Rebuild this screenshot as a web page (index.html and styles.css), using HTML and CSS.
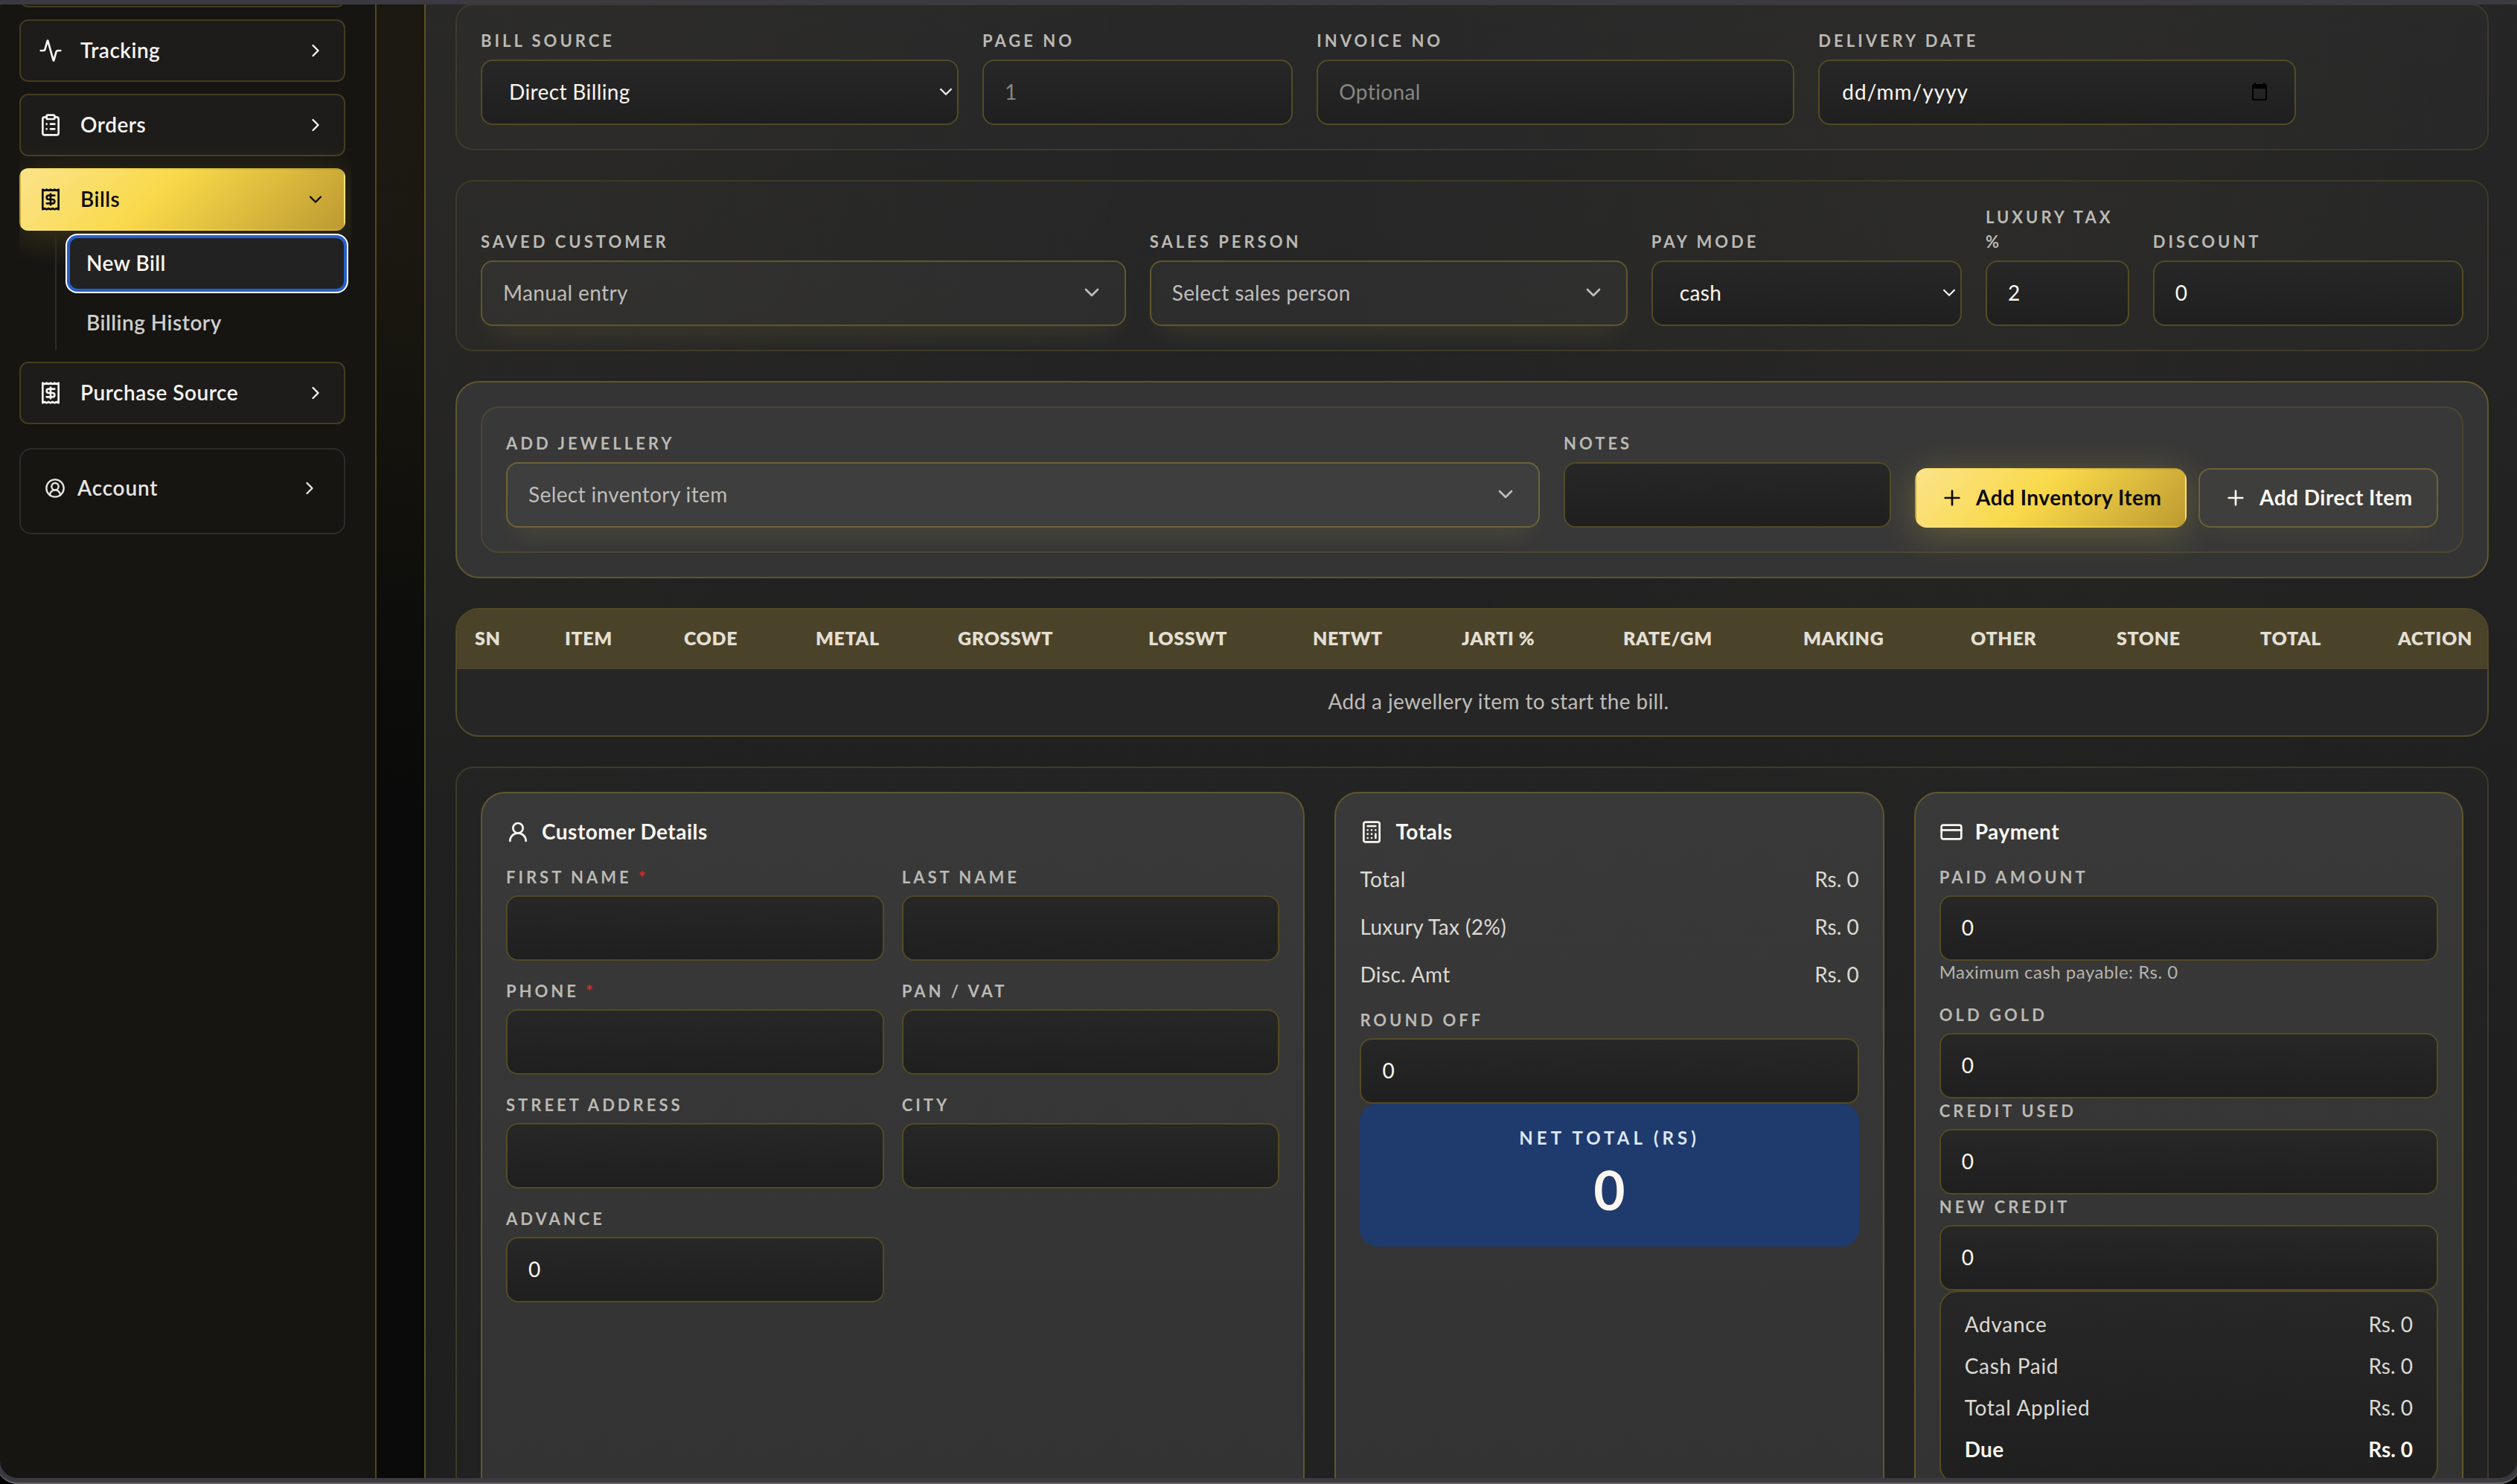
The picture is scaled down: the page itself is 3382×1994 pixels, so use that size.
FILE: index.html
```
<!DOCTYPE html>
<html lang="en">
<head>
    <meta charset="UTF-8">
    <meta name="viewport" content="width=device-width, initial-scale=1.0">
    <title>New Bill</title>
    <link rel="stylesheet" href="styles.css">
</head>
<body>

    <!-- Shared icons -->
    <svg class="sprite">
        <symbol id="chevron-right" viewBox="0 0 24 24"><path d="m9 18 6-6-6-6"/></symbol>
        <symbol id="chevron-down" viewBox="0 0 24 24"><path d="m6 9 6 6 6-6"/></symbol>
        <symbol id="plus" viewBox="0 0 24 24"><path d="M5 12h14M12 5v14"/></symbol>
        <symbol id="receipt" viewBox="0 0 24 24">
            <path d="M4 2v20l2-1 2 1 2-1 2 1 2-1 2 1 2-1 2 1V2l-2 1-2-1-2 1-2-1-2 1-2-1-2 1Z"/>
            <path d="M16 8h-6a2 2 0 1 0 0 4h4a2 2 0 1 1 0 4H8"/>
            <path d="M12 17.5v-11"/>
        </symbol>
    </svg>

    <div class="app">
        <aside class="sidebar">
            <nav class="nav">
                <a class="nav-item nav-hidden"></a>
                <a class="nav-item">
                    <svg class="icon" viewBox="0 0 24 24"><path d="M22 12h-2.48a2 2 0 0 0-1.93 1.46l-2.35 8.36a.25.25 0 0 1-.48 0L9.24 2.18a.25.25 0 0 0-.48 0l-2.35 8.36A2 2 0 0 1 4.49 12H2"/></svg>
                    <span>Tracking</span>
                    <svg class="icon chevron"><use href="#chevron-right"/></svg>
                </a>
                <a class="nav-item">
                    <svg class="icon" viewBox="0 0 24 24"><rect width="8" height="4" x="8" y="2" rx="1"/><path d="M16 4h2a2 2 0 0 1 2 2v14a2 2 0 0 1-2 2H6a2 2 0 0 1-2-2V6a2 2 0 0 1 2-2h2M12 11h4M12 16h4M8 11h.01M8 16h.01"/></svg>
                    <span>Orders</span>
                    <svg class="icon chevron"><use href="#chevron-right"/></svg>
                </a>
                <a class="nav-item active">
                    <svg class="icon"><use href="#receipt"/></svg>
                    <span>Bills</span>
                    <svg class="icon chevron"><use href="#chevron-down"/></svg>
                </a>
                <div class="subnav">
                    <a class="subnav-item current">New Bill</a>
                    <a class="subnav-item">Billing History</a>
                </div>
                <a class="nav-item">
                    <svg class="icon"><use href="#receipt"/></svg>
                    <span>Purchase Source</span>
                    <svg class="icon chevron"><use href="#chevron-right"/></svg>
                </a>
                <div class="account">
                    <svg class="icon" viewBox="0 0 24 24"><path d="M18 20a6 6 0 0 0-12 0"/><circle cx="12" cy="10" r="4"/><circle cx="12" cy="12" r="10"/></svg>
                    <span>Account</span>
                    <svg class="icon chevron"><use href="#chevron-right"/></svg>
                </div>
            </nav>
        </aside>

        <main class="main">
            <!-- Bill source -->
            <section class="card form-grid">
                <div class="field span-3">
                    <label>Bill Source</label>
                    <div class="control select">Direct Billing<svg class="arrow"><use href="#chevron-down"/></svg></div>
                </div>
                <div class="field span-2">
                    <label>Page No</label>
                    <input class="control" placeholder="1">
                </div>
                <div class="field span-3">
                    <label>Invoice No</label>
                    <input class="control" placeholder="Optional">
                </div>
                <div class="field span-3">
                    <label>Delivery Date</label>
                    <div class="control date">dd/mm/yyyy
                        <svg class="calendar" viewBox="0 0 24 24"><path d="M5 0h2v2h10V0h2v2h1a2 2 0 0 1 2 2v18a2 2 0 0 1-2 2H4a2 2 0 0 1-2-2V4a2 2 0 0 1 2-2h1ZM4 8v14h16V8Z" fill-rule="evenodd"/></svg>
                    </div>
                </div>
            </section>

            <!-- Customer and payment mode -->
            <section class="card form-grid">
                <div class="field span-4">
                    <label>Saved Customer</label>
                    <div class="control picker">Manual entry<svg class="icon"><use href="#chevron-down"/></svg></div>
                </div>
                <div class="field span-3">
                    <label>Sales Person</label>
                    <div class="control picker">Select sales person<svg class="icon"><use href="#chevron-down"/></svg></div>
                </div>
                <div class="field span-2">
                    <label>Pay Mode</label>
                    <div class="control select">cash<svg class="arrow"><use href="#chevron-down"/></svg></div>
                </div>
                <div class="field">
                    <label>Luxury Tax %</label>
                    <input class="control" value="2">
                </div>
                <div class="field span-2">
                    <label>Discount</label>
                    <input class="control" value="0">
                </div>
            </section>

            <!-- Add item -->
            <section class="card raised">
                <div class="add-row">
                    <div class="field">
                        <label>Add Jewellery</label>
                        <div class="control picker">Select inventory item<svg class="icon"><use href="#chevron-down"/></svg></div>
                    </div>
                    <div class="field">
                        <label>Notes</label>
                        <input class="control">
                    </div>
                    <div class="actions">
                        <button class="btn btn-gold"><svg class="icon"><use href="#plus"/></svg><span>Add Inventory Item</span></button>
                        <button class="btn btn-direct"><svg class="icon"><use href="#plus"/></svg><span>Add Direct Item</span></button>
                    </div>
                </div>
            </section>

            <!-- Items -->
            <section class="table-card">
                <table>
                    <thead>
                        <tr>
                            <th class="w-sn">SN</th>
                            <th class="w-item">Item</th>
                            <th class="w-code">Code</th>
                            <th class="w-metal">Metal</th>
                            <th class="w-gross">GrossWt</th>
                            <th class="w-loss">LossWt</th>
                            <th class="w-net">NetWt</th>
                            <th class="w-jarti">Jarti %</th>
                            <th class="w-rate">Rate/gm</th>
                            <th class="w-making">Making</th>
                            <th class="w-other">Other</th>
                            <th class="w-stone">Stone</th>
                            <th class="w-total">Total</th>
                            <th class="w-action">Action</th>
                        </tr>
                    </thead>
                    <tbody>
                        <tr>
                            <td colspan="14">Add a jewellery item to start the bill.</td>
                        </tr>
                    </tbody>
                </table>
            </section>

            <!-- Details, totals, payment -->
            <section class="card summary-grid">
                <div class="panel">
                    <h2>
                        <svg class="icon" viewBox="0 0 24 24"><circle cx="12" cy="8" r="5"/><path d="M20 21a8 8 0 0 0-16 0"/></svg>
                        <span>Customer Details</span>
                    </h2>
                    <div class="customer-grid">
                        <div class="field"><label>First Name <b>*</b></label><input class="control"></div>
                        <div class="field"><label>Last Name</label><input class="control"></div>
                        <div class="field"><label>Phone <b>*</b></label><input class="control"></div>
                        <div class="field"><label>PAN / VAT</label><input class="control"></div>
                        <div class="field"><label>Street Address</label><input class="control"></div>
                        <div class="field"><label>City</label><input class="control"></div>
                        <div class="field"><label>Advance</label><input class="control" value="0"></div>
                    </div>
                </div>

                <div class="panel">
                    <h2>
                        <svg class="icon" viewBox="0 0 24 24"><rect width="16" height="20" x="4" y="2" rx="2"/><path d="M8 6h8M16 14v4M16 10h.01M12 10h.01M8 10h.01M12 14h.01M8 14h.01M12 18h.01M8 18h.01"/></svg>
                        <span>Totals</span>
                    </h2>
                    <div class="totals">
                        <div class="line"><span>Total</span><span>Rs. 0</span></div>
                        <div class="line"><span>Luxury Tax (2%)</span><span>Rs. 0</span></div>
                        <div class="line"><span>Disc. Amt</span><span>Rs. 0</span></div>
                    </div>
                    <div class="field"><label>Round Off</label><input class="control" value="0"></div>
                    <div class="net-total">
                        <p>Net Total (Rs)</p>
                        <strong>0</strong>
                    </div>
                </div>

                <div class="panel">
                    <h2>
                        <svg class="icon" viewBox="0 0 24 24"><rect width="20" height="14" x="2" y="5" rx="2"/><path d="M2 10h20"/></svg>
                        <span>Payment</span>
                    </h2>
                    <div class="field"><label>Paid Amount</label><input class="control" value="0"></div>
                    <p class="hint">Maximum cash payable: Rs. 0</p>
                    <div class="field"><label>Old Gold</label><input class="control" value="0"></div>
                    <div class="field"><label>Credit Used</label><input class="control" value="0"></div>
                    <div class="field"><label>New Credit</label><input class="control" value="0"></div>
                    <div class="applied">
                        <div class="line"><span>Advance</span><span>Rs. 0</span></div>
                        <div class="line"><span>Cash Paid</span><span>Rs. 0</span></div>
                        <div class="line"><span>Total Applied</span><span>Rs. 0</span></div>
                        <div class="line due"><span>Due</span><span>Rs. 0</span></div>
                    </div>
                </div>
            </section>
        </main>
    </div>

    <div class="window-frame"></div>

</body>
</html>
```
FILE: styles.css
```
* {
    box-sizing: border-box;
}

body {
    margin: 0;
    height: 1994px;
    overflow: hidden;
    background: #0a0a0a;
    color: #fbf7f0;
    font-family: Lato, "Open Sans", sans-serif;
    font-size: 28px;
    line-height: 40px;
    letter-spacing: 0.38px;
}

p, h2 {
    margin: 0;
}

.sprite {
    display: none;
}

.icon {
    width: 32px;
    height: 32px;
    flex: none;
    fill: none;
    stroke: currentColor;
    stroke-width: 2;
    stroke-linecap: round;
    stroke-linejoin: round;
}

.app {
    display: flex;
    gap: 64px;
    height: 1994px;
    overflow: hidden;
    background: linear-gradient(180deg, #1b1910 0, #1a1810 330px, #0d0d0b 850px, #0a0a0a 1100px);
}

/* Sidebar */
.sidebar {
    width: 506px;
    flex: none;
    padding-left: 26px;
    background: #161512;
    border-right: 2px solid #51461f;
}

.nav {
    width: 446px;
    padding-right: 8px;
    overflow: hidden;
    font-weight: 600;
    letter-spacing: 0.5px;
    color: #f6f5f3;
    height: 100%;
}

.nav-item {
    display: flex;
    align-items: center;
    height: 84px;
    margin-bottom: 16px;
    padding: 0 24px;
    border: 2px solid #433c1f;
    border-radius: 12px;
    background: #1d1c1a;
}

.nav-item span {
    margin-left: 24px;
    padding-bottom: 3px;
}

.nav-hidden {
    margin-top: -74px;
}

.nav .chevron {
    width: 28px;
    height: 28px;
    margin-left: auto;
}

.nav-item.active {
    margin-bottom: 8px;
    border-color: transparent;
    background: linear-gradient(135deg, #fbe38a 0%, #f9d949 42%, #bd9a31 100%);
    box-shadow: 0 8px 48px rgba(249, 217, 73, 0.18);
    color: #0c0b08;
}

.subnav {
    display: flex;
    flex-direction: column;
    gap: 8px;
    width: 390px;
    margin: 0 0 16px 48px;
    padding-left: 16px;
    border-left: 2px solid #2b2a28;
}

.subnav-item {
    display: flex;
    align-items: center;
    height: 72px;
    padding: 0 24px 3px;
    border-radius: 12px;
    color: #d0cfcd;
}

.subnav-item.current {
    padding: 0 22px 3px;
    border: 2px solid #2860c8;
    background: #222;
    box-shadow: 0 0 0 2px #2860c8, 0 0 0 4px #fff;
    color: #fbf7f0;
}

.account {
    display: flex;
    height: 116px;
    margin-top: 32px;
    padding: 32px;
    border: 2px solid #2c2b2a;
    border-radius: 16px;
    color: #e8e6e2;
}

.account .icon {
    width: 28px;
    height: 28px;
    margin-top: 6px;
}

.account span {
    margin: -1px 0 0 16px;
    letter-spacing: 0.8px;
}

/* Content */
.main {
    flex: 1;
    display: flex;
    flex-direction: column;
    gap: 40px;
    padding: 5px 38px 0 40px;
    border-left: 2px solid #5b5027;
    background:
        radial-gradient(900px 900px at 74% 16%, rgba(248, 217, 75, 0.022), transparent),
        radial-gradient(900px 1000px at 4% 8%, rgba(248, 217, 75, 0.022), transparent),
        linear-gradient(180deg, #252526 0, #202020 1100px, #1f1f1f 100%);
}

.card {
    flex: none;
    padding: 32px;
    border: 2px solid #3e3a28;
    border-radius: 24px;
    background: rgba(255, 255, 255, 0.016);
}

.form-grid {
    display: grid;
    grid-template-columns: repeat(12, 1fr);
    gap: 32px;
    align-items: end;
}

.span-2 { grid-column: span 2; }
.span-3 { grid-column: span 3; }
.span-4 { grid-column: span 4; }

.field {
    min-width: 0;
}

label {
    display: block;
    margin-bottom: 8px;
    font-size: 22px;
    font-weight: 700;
    line-height: 33px;
    letter-spacing: 4px;
    text-transform: uppercase;
    color: #bbb9b4;
}

.form-grid label,
.add-row label {
    margin: -1px 0 9px;
}

label b {
    color: #c9302c;
    font-weight: 900;
}

.control {
    display: flex;
    align-items: center;
    width: 100%;
    height: 88px;
    padding: 0 28px 2px;
    border: 2px solid #534a26;
    border-radius: 16px;
    background: linear-gradient(180deg, #272727, #1f1f1f);
    color: #fbf7f0;
    font: inherit;
    letter-spacing: inherit;
}

.control::placeholder {
    color: #878683;
    opacity: 1;
}

.select {
    padding: 0 0 2px 36px;
}

.arrow {
    width: 30px;
    height: 30px;
    margin-left: auto;
    fill: none;
    stroke: #f5f3ee;
    stroke-width: 1.8;
}

.date {
    padding: 0 34px 2px 30px;
    letter-spacing: 1px;
}

.calendar {
    width: 26px;
    height: 24px;
    margin-left: auto;
    fill: #000;
}

.picker {
    justify-content: space-between;
    border-color: #61562f;
    background: rgba(255, 255, 255, 0.035);
    box-shadow: 0 24px 32px -16px rgba(248, 217, 75, 0.1);
    color: #bfbdb9;
}

.raised {
    border-color: #61562f;
    border-radius: 32px;
    background: #343434;
}

.raised .picker {
    border-color: #6f6339;
    background: #3e3e3e;
}

.add-row {
    display: grid;
    grid-template-columns: 1fr 440px auto;
    gap: 32px;
    align-items: end;
    padding: 32px;
    border: 2px solid #4b4632;
    border-radius: 24px;
    background: #383838;
}

.actions {
    display: flex;
    gap: 16px;
}

.btn {
    display: flex;
    align-items: center;
    gap: 16px;
    width: 365px;
    height: 80px;
    padding: 0 32px;
    border: 2px solid transparent;
    border-radius: 16px;
    font: inherit;
    font-weight: 700;
    letter-spacing: 0.5px;
    white-space: nowrap;
}

.btn span {
    padding-bottom: 3px;
}

.btn-gold {
    background: linear-gradient(135deg, #fbe38a 0%, #f9d949 45%, #bd9a31 100%);
    box-shadow: 0 8px 48px rgba(249, 217, 73, 0.24);
    color: #0c0b08;
}

.btn-direct {
    width: 322px;
    border-color: #6c6139;
    background: #3e3e3d;
    box-shadow: 0 24px 32px -16px rgba(248, 217, 75, 0.06);
    color: #fbf7f0;
}

/* Items table */
.table-card {
    flex: none;
    height: 173px;
    overflow: hidden;
    border: 2px solid #534a26;
    border-radius: 32px;
    background: #262626;
}

table {
    width: 2728px;
    table-layout: fixed;
    border-collapse: collapse;
}

th {
    height: 80px;
    padding: 0 0 5px 24px;
    background: #4a432a;
    color: #e3dfd3;
    font-size: 25px;
    font-weight: 800;
    letter-spacing: 0.6px;
    text-align: left;
    text-transform: uppercase;
    white-space: nowrap;
}

.w-sn { width: 121px; }
.w-item { width: 160px; }
.w-code { width: 177px; }
.w-metal { width: 191px; }
.w-gross { width: 256px; }
.w-loss { width: 221px; }
.w-net { width: 200px; }
.w-jarti { width: 217px; }
.w-rate { width: 242px; }
.w-making { width: 225px; }
.w-other { width: 196px; }
.w-stone { width: 193px; }
.w-total { width: 185px; }
.w-action { width: 144px; }

td {
    height: 89px;
    padding: 0 0 4px 71px;
    color: #bfbdb9;
    text-align: center;
}

/* Bottom panels */
.summary-grid {
    display: grid;
    grid-template-columns: 1.5fr 1fr 1fr;
    gap: 40px;
    height: 1100px;
}

.panel {
    padding: 32px;
    border: 2px solid #61562f;
    border-radius: 32px;
    background: linear-gradient(180deg, #393939 0, #333 900px);
}

h2 {
    display: flex;
    align-items: center;
    gap: 16px;
    height: 40px;
    margin-bottom: 24px;
    font-size: 28px;
    font-weight: 700;
    line-height: 40px;
    letter-spacing: 0.5px;
}

h2 span {
    margin-top: -2px;
}

.customer-grid {
    display: grid;
    grid-template-columns: 1fr 1fr;
    gap: 24px;
}

.totals {
    display: flex;
    flex-direction: column;
    gap: 24px;
    margin-bottom: 24px;
}

.line {
    display: flex;
    justify-content: space-between;
    height: 40px;
    line-height: 38px;
    color: #dcdad3;
}

.line span:last-child {
    letter-spacing: 0;
}

.net-total {
    height: 192px;
    padding-top: 28px;
    border-radius: 24px;
    background: #1f3a6c;
    text-align: center;
}

.net-total p {
    font-size: 24px;
    font-weight: 700;
    line-height: 36px;
    letter-spacing: 5px;
    text-transform: uppercase;
    color: #dbe7fb;
}

.net-total strong {
    display: block;
    margin-top: 6px;
    font-size: 73px;
    line-height: 90px;
}

.hint {
    height: 32px;
    margin-bottom: 24px;
    font-size: 24px;
    line-height: 30px;
    letter-spacing: 0.48px;
    color: #b5b3ae;
}

.applied {
    display: flex;
    flex-direction: column;
    gap: 16px;
    padding: 24px 32px;
    border: 2px solid #534a26;
    border-radius: 24px;
    background: linear-gradient(180deg, #272727, #1f1f1f);
}

.applied .line {
    letter-spacing: 0.7px;
}

.applied .due {
    font-weight: 700;
    letter-spacing: 0.3px;
    color: #fbf7f0;
}

/* Window edge drawn over the page */
.window-frame {
    position: absolute;
    inset: 0 -6px;
    border: 6px solid #3b3a40;
    border-radius: 8px 8px 30px 30px;
    box-shadow: 0 0 0 30px #000, inset 0 -2px 0 #3b3a40;
    pointer-events: none;
}

.window-frame::after {
    content: "";
    position: absolute;
    inset: -6px;
    border-bottom: 2px solid #656264;
    border-radius: 0 0 30px 30px;
}
```
